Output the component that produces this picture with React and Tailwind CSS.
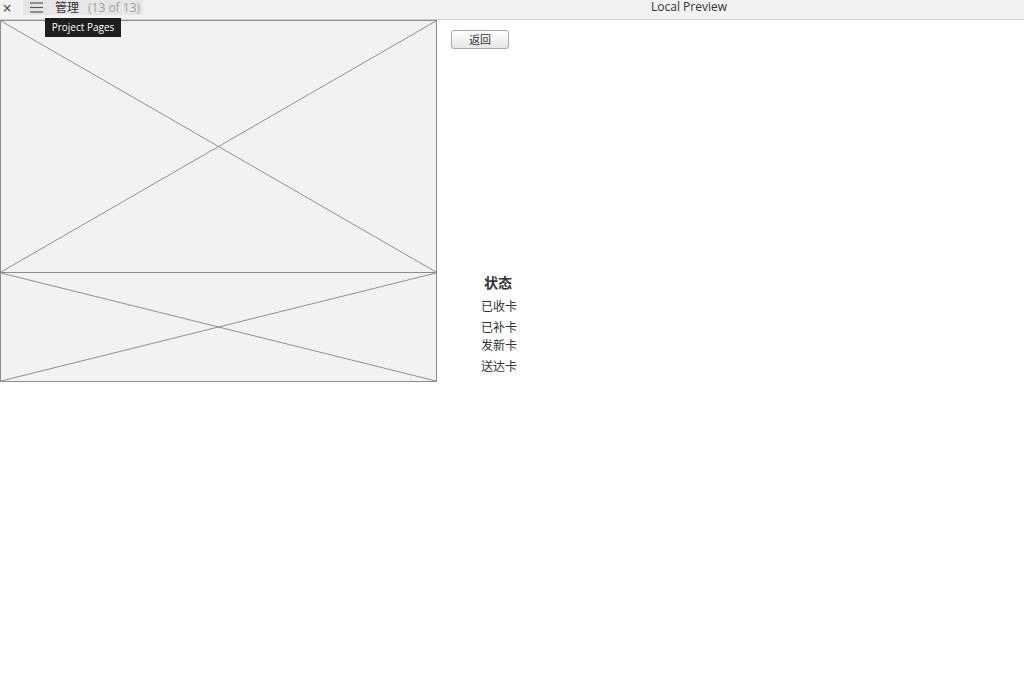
import React from "react";

function Placeholder({ className }) {
  return (
    <div className={"relative bg-[#f2f2f2] border border-[#8c8c8c] " + className}>
      <svg className="absolute inset-0 w-full h-full" preserveAspectRatio="none" viewBox="0 0 100 100">
        <line x1="0" y1="0" x2="100" y2="100" stroke="#8f8f8f" strokeWidth="1" vectorEffect="non-scaling-stroke" />
        <line x1="100" y1="0" x2="0" y2="100" stroke="#8f8f8f" strokeWidth="1" vectorEffect="non-scaling-stroke" />
      </svg>
    </div>
  );
}

export default function App() {
  const font = { fontFamily: '"Open Sans", "Noto Sans CJK SC", sans-serif' };
  return (
    <div className="relative w-[1024px] h-[673px] bg-white overflow-hidden" style={font}>
      {/* top bar */}
      <div className="relative flex items-start h-[20px] bg-[#f2f2f2] border-b border-[#d0d0d0]">
        <div className="w-[14px] h-[16px] flex items-center justify-center text-[16px] leading-[16px] text-[#444]">×</div>
        <div className="ml-[9px] flex items-center h-[15px] bg-[#e6e6e6] pl-[7px] pr-[3px]">
          <svg width="13" height="11" viewBox="0 0 13 11">
            <line x1="0" y1="1" x2="13" y2="1" stroke="#555" strokeWidth="1.2" />
            <line x1="0" y1="5.5" x2="13" y2="5.5" stroke="#555" strokeWidth="1.2" />
            <line x1="0" y1="10" x2="13" y2="10" stroke="#555" strokeWidth="1.2" />
          </svg>
          <span className="ml-[12px] text-[12px] leading-[14px] text-[#333]">管理</span>
          <span className="ml-[9px] text-[12px] leading-[14px] text-[#a0a0a0]">(13 of 13)</span>
        </div>
        <div className="ml-[508px] text-[12px] leading-[14px] text-[#333]">Local Preview</div>
      </div>

      {/* tooltip */}
      <div className="absolute z-10 left-[45px] top-[18px] w-[76px] h-[19px] bg-[#1e1e1e] text-white text-[10px] flex items-center justify-center">
        Project Pages
      </div>

      {/* content */}
      <div className="flex">
        <div className="w-[437px] flex flex-col">
          <Placeholder className="h-[253px]" />
          <Placeholder className="h-[110px] -mt-px" />
        </div>
        <div className="flex flex-col ml-[14px]">
          <button className="mt-[10px] w-[58px] h-[19px] border border-[#a8a8a8] rounded-[3px] bg-gradient-to-b from-white to-[#e6e6e6] text-[11px] leading-none text-[#333] flex items-center justify-center">
            返回
          </button>
          <div className="mt-[225px] ml-[30px] flex flex-col text-[#333]">
            <div className="ml-[3px] text-[14px] font-bold leading-[18px]">状态</div>
            <div className="mt-[8px] text-[12px] leading-[14px]">已收卡</div>
            <div className="mt-[7px] text-[12px] leading-[14px]">已补卡</div>
            <div className="mt-[4px] text-[12px] leading-[14px]">发新卡</div>
            <div className="mt-[7px] text-[12px] leading-[14px]">送达卡</div>
          </div>
        </div>
      </div>
    </div>
  );
}
